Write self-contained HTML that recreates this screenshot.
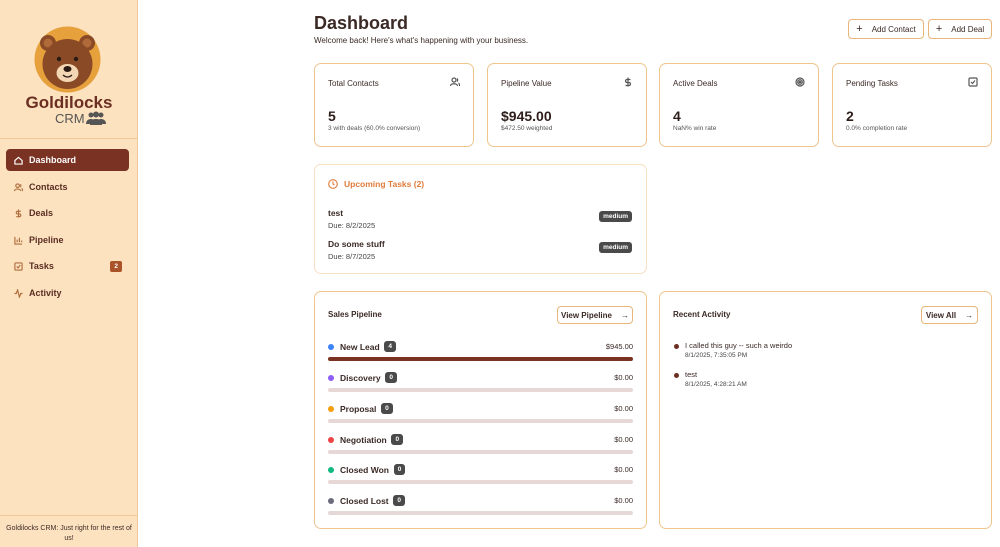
<!DOCTYPE html>
<html><head><style>
*{box-sizing:border-box;margin:0;padding:0}
body{width:1000px;height:547px;overflow:hidden;background:#fff;font-family:"Liberation Sans",sans-serif;color:#3b2a26;position:relative}
.sb{position:absolute;left:0;top:0;width:138px;height:547px;background:#fde2bf;border-right:1px solid #f0c99a}
.nav{position:absolute;left:6px;width:123px;height:22px;border-radius:4px;font-size:9px;font-weight:bold;color:#5a2e22;display:flex;align-items:center;padding-left:8px}
.nav svg{width:9px;height:9px;margin-right:6px;fill:none;stroke:#b07040;stroke-width:1.3}
.nav.act{background:#7a3323;color:#fff}
.nav.act svg{stroke:#fff}
.card{position:absolute;border:1px solid #efc58e;border-radius:7px;background:#fff}
.ct{position:absolute;left:13px;top:15px;font-size:8px;color:#3b2a26}
.cv{position:absolute;left:13px;top:44px;font-size:14px;font-weight:bold;color:#2e1e1a}
.cs{position:absolute;left:13px;top:61px;font-size:6.5px;color:#555}
.ci{position:absolute;right:13px;top:13px;width:10px;height:10px;fill:none;stroke:#555;stroke-width:1.2}
.btn{position:absolute;border:1px solid #e9b57a;border-radius:4px;font-size:8px;color:#3b2a26;display:flex;align-items:center;justify-content:center;background:#fff}
.badge{display:inline-block;background:#4a4a4a;color:#fff;font-size:6.5px;font-weight:bold;border-radius:3px;padding:2px 4px}
.row{position:absolute;left:13px;width:305px}
.row .l{display:flex;align-items:center;font-size:8.5px;color:#3b2a26;font-weight:bold}
.dot{width:6px;height:6px;border-radius:50%;margin-right:6px}
.row .v{position:absolute;right:0;top:1px;font-size:7.5px}
.bar{position:absolute;left:0;top:16px;width:305px;height:4px;border-radius:2px;background:#e6d8d6}
</style></head><body>
<div class="sb">
<svg style="position:absolute;left:34px;top:26px" width="67" height="67" viewBox="0 0 67 67">
<circle cx="33.5" cy="33.5" r="33" fill="#e6a03c"/>
<circle cx="14" cy="17" r="8" fill="#8a4a26"/><circle cx="14" cy="17" r="4.5" fill="#b06a3a"/>
<circle cx="53" cy="17" r="8" fill="#8a4a26"/><circle cx="53" cy="17" r="4.5" fill="#b06a3a"/>
<ellipse cx="33.5" cy="38" rx="25" ry="25" fill="#8a4a26"/>
<circle cx="25" cy="33" r="2.2" fill="#2a1a14"/><circle cx="42" cy="33" r="2.2" fill="#2a1a14"/>
<ellipse cx="33.5" cy="47" rx="11" ry="9" fill="#f3d7b5"/>
<ellipse cx="33.5" cy="43" rx="4" ry="3" fill="#2a1a14"/>
<path d="M29 49 Q33.5 53 38 49" stroke="#2a1a14" stroke-width="1.2" fill="none"/>
</svg>
<div style="position:absolute;left:0;width:138px;top:93px;text-align:center;font-size:17px;font-weight:bold;color:#6b2e22">Goldilocks</div>
<div style="position:absolute;left:55px;top:111px;font-size:13px;color:#555">CRM</div>
<svg style="position:absolute;left:86px;top:111px" width="20" height="14" viewBox="0 0 20 14" fill="#555"><circle cx="5" cy="4" r="2.5"/><circle cx="15" cy="4" r="2.5"/><circle cx="10" cy="3.5" r="3"/><path d="M0 13c0-4 3-5 5-5s3 1 3 1l4 0s1-1 3-1 5 1 5 5z"/><path d="M4 14c0-5 3-6 6-6s6 1 6 6z"/></svg>
<div style="position:absolute;left:0;top:138px;width:138px;border-top:1px solid #f0c99a"></div>
<div class="nav act" style="top:149px"><svg viewBox="0 0 10 10"><path d="M1 5L5 1.5L9 5V9H1Z"/></svg>Dashboard</div>
<div class="nav" style="top:176px"><svg viewBox="0 0 10 10"><circle cx="4" cy="3" r="2"/><path d="M0.5 9c0-3 7-3 7 0M7 1.5a2 2 0 010 3M8.5 6c1 .5 1 2 1 3"/></svg>Contacts</div>
<div class="nav" style="top:202px"><svg viewBox="0 0 10 10"><path d="M5 0.5V9.5M7.5 2.5H4A1.5 1.5 0 004 5.5H6A1.5 1.5 0 016 8.5H2.5"/></svg>Deals</div>
<div class="nav" style="top:229px"><svg viewBox="0 0 10 10"><path d="M1 1V9H9M3.5 7V4M6 7V2M8.5 7V5"/></svg>Pipeline</div>
<div class="nav" style="top:255px"><svg viewBox="0 0 10 10"><rect x="1" y="1" width="8" height="8" rx="1"/><path d="M3 5L4.5 6.5L7 3.5"/></svg>Tasks<span style="position:absolute;right:7px;background:#a9532a;color:#fff;font-size:6.5px;border-radius:2px;padding:2px 4px">2</span></div>
<div class="nav" style="top:282px"><svg viewBox="0 0 10 10"><path d="M0.5 5H2.5L4 1L6 9L7.5 5H9.5"/></svg>Activity</div>
<div style="position:absolute;left:0;top:515px;width:138px;border-top:1px solid #f0c99a"></div>
<div style="position:absolute;left:6px;top:524px;width:126px;text-align:center;font-size:7px;line-height:10px;color:#3b2a26">Goldilocks CRM: Just right for the rest of us!</div>
</div>

<div style="position:absolute;left:314px;top:13px;font-size:18px;font-weight:bold;color:#3b2a26">Dashboard</div>
<div style="position:absolute;left:314px;top:36px;font-size:8px;color:#3b2a26">Welcome back! Here's what's happening with your business.</div>
<div class="btn" style="left:848px;top:19px;width:76px;height:20px"><span style="margin-right:9px;font-size:11px">+</span>Add Contact</div>
<div class="btn" style="left:928px;top:19px;width:64px;height:20px"><span style="margin-right:9px;font-size:11px">+</span>Add Deal</div>

<div class="card" style="left:314px;top:63px;width:160px;height:84px"><div class="ct">Total Contacts</div><svg class="ci" viewBox="0 0 10 10"><circle cx="4" cy="3" r="2"/><path d="M0.5 9c0-3 7-3 7 0M7 1.5a2 2 0 010 3M8.5 6c1 .5 1 2 1 3"/></svg><div class="cv">5</div><div class="cs">3 with deals (60.0% conversion)</div></div>
<div class="card" style="left:487px;top:63px;width:160px;height:84px"><div class="ct">Pipeline Value</div><svg class="ci" viewBox="0 0 10 10"><path d="M5 0.5V9.5M7.5 2.5H4A1.5 1.5 0 004 5.5H6A1.5 1.5 0 016 8.5H2.5"/></svg><div class="cv">$945.00</div><div class="cs">$472.50 weighted</div></div>
<div class="card" style="left:659px;top:63px;width:160px;height:84px"><div class="ct">Active Deals</div><svg class="ci" viewBox="0 0 10 10"><circle cx="5" cy="5" r="4"/><circle cx="5" cy="5" r="2.3"/><circle cx="5" cy="5" r=".8"/></svg><div class="cv">4</div><div class="cs">NaN% win rate</div></div>
<div class="card" style="left:832px;top:63px;width:160px;height:84px"><div class="ct">Pending Tasks</div><svg class="ci" viewBox="0 0 10 10"><rect x="1" y="1" width="8" height="8" rx="1"/><path d="M3 5L4.5 6.5L7 3.5"/></svg><div class="cv">2</div><div class="cs">0.0% completion rate</div></div>

<div class="card" style="left:314px;top:164px;width:333px;height:110px;border-color:#f7dfc3">
<svg style="position:absolute;left:13px;top:14px" width="10" height="10" viewBox="0 0 10 10" fill="none" stroke="#e07b3a" stroke-width="1.1"><circle cx="5" cy="5" r="4.3"/><path d="M5 2.5V5L6.5 6"/></svg>
<div style="position:absolute;left:29px;top:14px;font-size:8.5px;font-weight:bold;color:#e07b3a">Upcoming Tasks (2)</div>
<div style="position:absolute;left:13px;top:43px;font-size:8.5px;font-weight:bold">test</div>
<div style="position:absolute;left:13px;top:56px;font-size:7.5px;color:#444">Due: 8/2/2025</div>
<span class="badge" style="position:absolute;right:14px;top:46px">medium</span>
<div style="position:absolute;left:13px;top:74px;font-size:8.5px;font-weight:bold">Do some stuff</div>
<div style="position:absolute;left:13px;top:87px;font-size:7.5px;color:#444">Due: 8/7/2025</div>
<span class="badge" style="position:absolute;right:14px;top:77px">medium</span>
</div>

<div class="card" style="left:314px;top:291px;width:333px;height:238px">
<div style="position:absolute;left:13px;top:18px;font-size:8px;font-weight:bold">Sales Pipeline</div>
<div class="btn" style="left:242px;top:14px;width:76px;height:18px;font-weight:bold">View Pipeline<span style="margin-left:9px">→</span></div>
<div class="row" style="top:49px"><div class="l"><span class="dot" style="background:#3b82f6"></span>New Lead&nbsp;&nbsp;<span class="badge">4</span></div><div class="v">$945.00</div><div class="bar" style="background:#7a3323"></div></div>
<div class="row" style="top:80px"><div class="l"><span class="dot" style="background:#8b5cf6"></span>Discovery&nbsp;&nbsp;<span class="badge">0</span></div><div class="v">$0.00</div><div class="bar"></div></div>
<div class="row" style="top:111px"><div class="l"><span class="dot" style="background:#f59e0b"></span>Proposal&nbsp;&nbsp;<span class="badge">0</span></div><div class="v">$0.00</div><div class="bar"></div></div>
<div class="row" style="top:142px"><div class="l"><span class="dot" style="background:#ef4444"></span>Negotiation&nbsp;&nbsp;<span class="badge">0</span></div><div class="v">$0.00</div><div class="bar"></div></div>
<div class="row" style="top:172px"><div class="l"><span class="dot" style="background:#10b981"></span>Closed Won&nbsp;&nbsp;<span class="badge">0</span></div><div class="v">$0.00</div><div class="bar"></div></div>
<div class="row" style="top:203px"><div class="l"><span class="dot" style="background:#6b6b7b"></span>Closed Lost&nbsp;&nbsp;<span class="badge">0</span></div><div class="v">$0.00</div><div class="bar"></div></div>
</div>

<div class="card" style="left:659px;top:291px;width:333px;height:238px">
<div style="position:absolute;left:13px;top:18px;font-size:8px;font-weight:bold">Recent Activity</div>
<div class="btn" style="left:261px;top:14px;width:57px;height:18px;font-weight:bold">View All<span style="margin-left:9px">→</span></div>
<span style="position:absolute;left:14px;top:52px;width:5px;height:5px;border-radius:50%;background:#6b2e22"></span>
<div style="position:absolute;left:25px;top:49px;font-size:7.5px">I called this guy -- such a weirdo</div>
<div style="position:absolute;left:25px;top:60px;font-size:6.5px;color:#444">8/1/2025, 7:35:05 PM</div>
<span style="position:absolute;left:14px;top:81px;width:5px;height:5px;border-radius:50%;background:#6b2e22"></span>
<div style="position:absolute;left:25px;top:78px;font-size:7.5px">test</div>
<div style="position:absolute;left:25px;top:89px;font-size:6.5px;color:#444">8/1/2025, 4:28:21 AM</div>
</div>
</body></html>
